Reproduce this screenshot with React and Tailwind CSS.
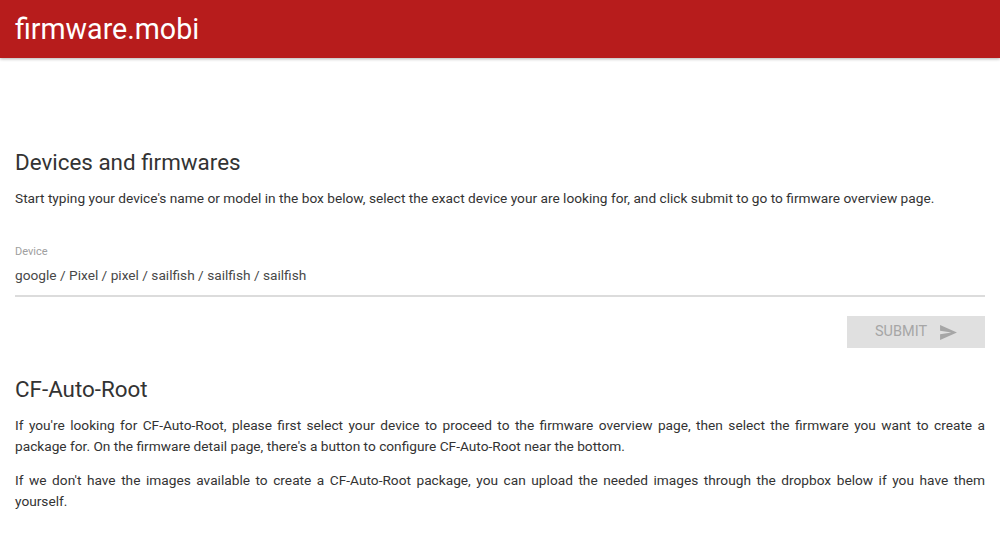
export default function App() {
  return (
    <div className="min-h-[552px] bg-white font-['Roboto',sans-serif] text-[#333333] overflow-hidden">
      {/* Toolbar */}
      <header className="h-[58px] bg-[#b71c1c] shadow-[0_1px_3px_rgba(0,0,0,0.3)] px-[15px] flex items-center">
        <span className="text-[28.6px] text-white leading-none">firmware.mobi</span>
      </header>

      <main className="px-[15px] pt-[89px]">
        <h2 className="text-[22.4px] leading-[30px]">Devices and firmwares</h2>
        <p className="mt-[11px] text-[13.7px] leading-[20px]">
          Start typing your device's name or model in the box below, select the exact device your are looking for, and click submit to go to firmware overview page.
        </p>

        {/* Device input */}
        <div className="mt-[37px]">
          <label className="block text-[11px] leading-[14px] text-[#a0a0a0]">Device</label>
          <div className="mt-[6px] h-[32px] border-b-2 border-[#dcdcdc] text-[13.7px] leading-[20px] text-[#484848]">
            google / Pixel / pixel / sailfish / sailfish / sailfish
          </div>
        </div>

        <div className="mt-[19px] flex justify-end">
          <button className="w-[138px] h-[32px] bg-[#e0e0e0] text-[#a6a6a6] text-[14.5px] flex items-center justify-center gap-[13px]">
            SUBMIT
            <svg className="w-[17px] h-[15px]" viewBox="3 4 18 16" fill="currentColor">
              <path d="M3 4l18 8-18 8v-6.2L15 12 3 10.2z" />
            </svg>
          </button>
        </div>

        <h2 className="mt-[26px] text-[22.4px] leading-[30px]">CF-Auto-Root</h2>
        <p className="mt-[11px] text-[13.7px] leading-[21px] text-justify">
          If you're looking for CF-Auto-Root, please first select your device to proceed to the firmware overview page, then select the firmware you want to create a package for. On the firmware detail page, there's a button to configure CF-Auto-Root near the bottom.
        </p>
        <p className="mt-[13px] text-[13.7px] leading-[21px] text-justify">
          If we don't have the images available to create a CF-Auto-Root package, you can upload the needed images through the dropbox below if you have them yourself.
        </p>
      </main>
    </div>
  )
}
